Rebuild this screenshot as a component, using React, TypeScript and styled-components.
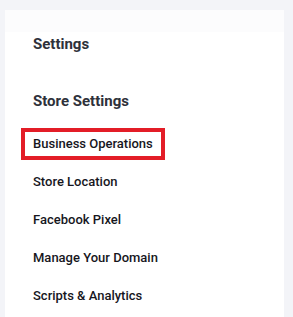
import React from "react";
import styled, { createGlobalStyle } from "styled-components";

const GlobalStyle = createGlobalStyle`
	body {
		margin: 0;
		background-color: #f3f4f8;
		font-family: Roboto, "Liberation Sans", sans-serif;
	}
`;

const Page = styled.div`
	padding: 10px 9px 0 5px;
	height: 317px;
	box-sizing: border-box;
	overflow: hidden;
`;

const Card = styled.div`
	background-color: #ffffff;
	height: 100%;
	.top {
		background-color: #fcfcfd;
		height: 22px;
	}
`;

const Title = styled.h2`
	margin: 0;
	padding: 2px 0 0 28px;
	font-size: 15px;
	font-weight: 700;
	color: #2e313a;
	line-height: 20px;
`;

const Section = styled.h3`
	margin: 0;
	padding: 37px 0 0 28px;
	font-size: 15px;
	font-weight: 700;
	color: #2e313a;
	line-height: 20px;
`;

const Menu = styled.ul`
	list-style: none;
	margin: 0;
	padding: 17px 0 0 16px;
	display: flex;
	flex-direction: column;
	gap: 6px;
`;

const Item = styled.li<{ $active?: boolean }>`
	align-self: flex-start;
	font-size: 13px;
	font-weight: 500;
	color: #16161d;
	line-height: 16px;
	padding: 4px 8px;
	border: 4px solid ${(p) => (p.$active ? "#e31d27" : "transparent")};
`;

const items = [
	"Business Operations",
	"Store Location",
	"Facebook Pixel",
	"Manage Your Domain",
	"Scripts & Analytics",
];

const App = () => {
	return (
		<Page>
			<GlobalStyle />
			<Card>
				<div className="top" />
				<Title>Settings</Title>
				<Section>Store Settings</Section>
				<Menu>
					{items.map((item, i) => (
						<Item key={item} $active={i === 0}>
							{item}
						</Item>
					))}
				</Menu>
			</Card>
		</Page>
	);
};

export default App;
